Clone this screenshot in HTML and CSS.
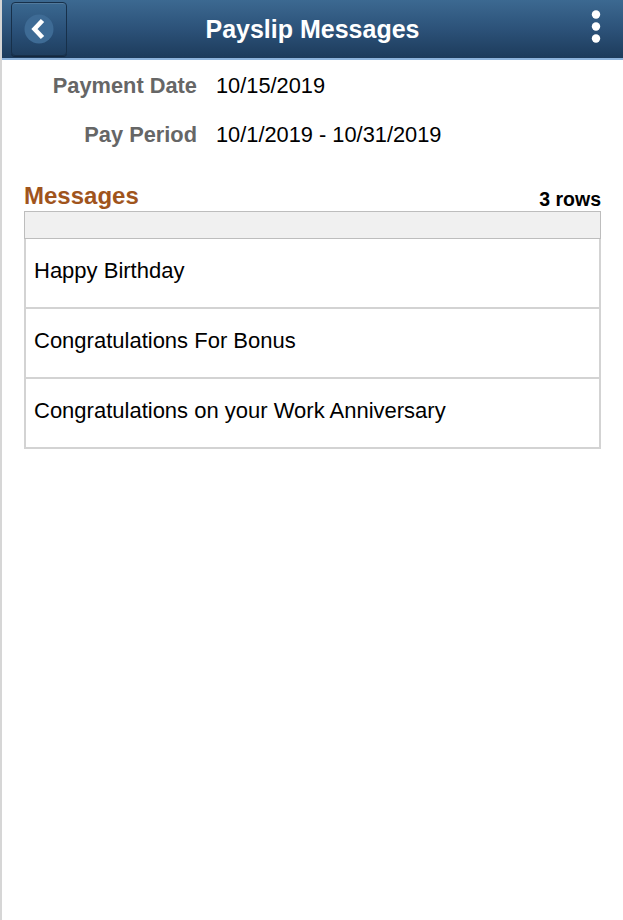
FILE: index.html
```html
<!DOCTYPE html>
<html lang="en">
<head>
<meta charset="utf-8">
<title>Payslip Messages</title>
<link rel="stylesheet" href="styles.css">
</head>
<body>
<div class="page">
  <header class="topbar">
    <div class="tb-left">
      <button class="back-btn" aria-label="Back">
        <svg width="30" height="30" viewBox="0 0 30 30">
          <circle cx="15" cy="15" r="14.5" fill="#3e6b95"/>
          <path d="M18.5 6.5 L10.5 15 L18.5 23.5" fill="none" stroke="#fff" stroke-width="4.6" stroke-linecap="butt" stroke-linejoin="miter"/>
        </svg>
      </button>
    </div>
    <h1 class="title">Payslip Messages</h1>
    <div class="tb-right">
      <svg class="dots" width="12" height="34" viewBox="0 0 12 34">
        <circle cx="6" cy="4.5" r="4.2" fill="#fff"/>
        <circle cx="6" cy="16.5" r="4.2" fill="#fff"/>
        <circle cx="6" cy="28.5" r="4.2" fill="#fff"/>
      </svg>
    </div>
  </header>

  <section class="details">
    <div class="drow">
      <span class="dlabel">Payment Date</span>
      <span class="dvalue">10/15/2019</span>
    </div>
    <div class="drow">
      <span class="dlabel">Pay Period</span>
      <span class="dvalue">10/1/2019 - 10/31/2019</span>
    </div>
  </section>

  <section class="messages">
    <div class="msg-head">
      <h2 class="msg-title">Messages</h2>
      <span class="msg-count">3 rows</span>
    </div>
    <div class="grid">
      <div class="grid-head"></div>
      <div class="grid-row">Happy Birthday</div>
      <div class="grid-row">Congratulations For Bonus</div>
      <div class="grid-row">Congratulations on your Work Anniversary</div>
    </div>
  </section>
</div>
</body>
</html>
```

FILE: styles.css
```css
html, body {
  margin: 0;
  padding: 0;
  background: #fff;
}

body {
  font-family: "Liberation Sans", Arial, sans-serif;
  color: #000;
}

.page {
  border-left: 2px solid #d6d6d6;
  min-height: 920px;
  box-sizing: border-box;
}

.topbar {
  display: grid;
  grid-template-columns: 1fr auto 1fr;
  align-items: center;
  height: 58px;
  border-bottom: 2px solid #8db3db;
  background: linear-gradient(to bottom, #3c6991 0%, #2c5279 50%, #1d3b5b 100%);
}

.tb-left {
  display: flex;
  align-items: center;
}

.back-btn {
  margin-left: 9px;
  width: 56px;
  height: 54px;
  padding: 0;
  border: 1px solid #17304a;
  border-radius: 4px;
  background: linear-gradient(to bottom, #3a6890 0%, #2a5078 55%, #1f3f60 100%);
  box-shadow: inset 0 1px 0 rgba(255,255,255,0.12), 0 1px 0 #14283e;
  display: flex;
  align-items: center;
  justify-content: center;
  cursor: pointer;
}

.back-btn svg {
  display: block;
}

.title {
  margin: 0;
  font-size: 25px;
  font-weight: bold;
  color: #fff;
  line-height: 58px;
  white-space: nowrap;
}

.tb-right {
  display: flex;
  justify-content: flex-end;
  align-items: center;
  padding-right: 21px;
}

.dots {
  display: block;
  margin-top: -4px;
}

.details {
  padding-top: 1px;
}

.drow {
  display: flex;
  align-items: baseline;
  height: 49px;
  line-height: 49px;
}

.dlabel {
  width: 195px;
  text-align: right;
  font-weight: bold;
  color: #666;
  font-size: 21.8px;
}

.dvalue {
  margin-left: 19px;
  font-size: 21.8px;
  color: #000;
}

.messages {
  margin: 21px 22px 0 22px;
}

.msg-head {
  display: flex;
  justify-content: space-between;
  align-items: flex-end;
  height: 31px;
}

.msg-title {
  margin: 0;
  font-size: 24px;
  line-height: 31px;
  font-weight: bold;
  color: #a0541c;
}

.msg-count {
  font-size: 19.5px;
  line-height: 22px;
  font-weight: bold;
  color: #000;
  margin-bottom: 1px;
}

.grid {
  display: flex;
  flex-direction: column;
}

.grid-head {
  height: 26px;
  background: #f0f0f0;
  border: 1px solid #bdbdbd;
}

.grid-row {
  height: 68px;
  line-height: 64px;
  padding: 0 8px;
  font-size: 22px;
  color: #000;
  border-left: 2px solid #d3d3d3;
  border-right: 2px solid #d3d3d3;
  border-bottom: 2px solid #d3d3d3;
  white-space: nowrap;
}

.grid-row:first-of-type {
  height: 69px;
}
```
